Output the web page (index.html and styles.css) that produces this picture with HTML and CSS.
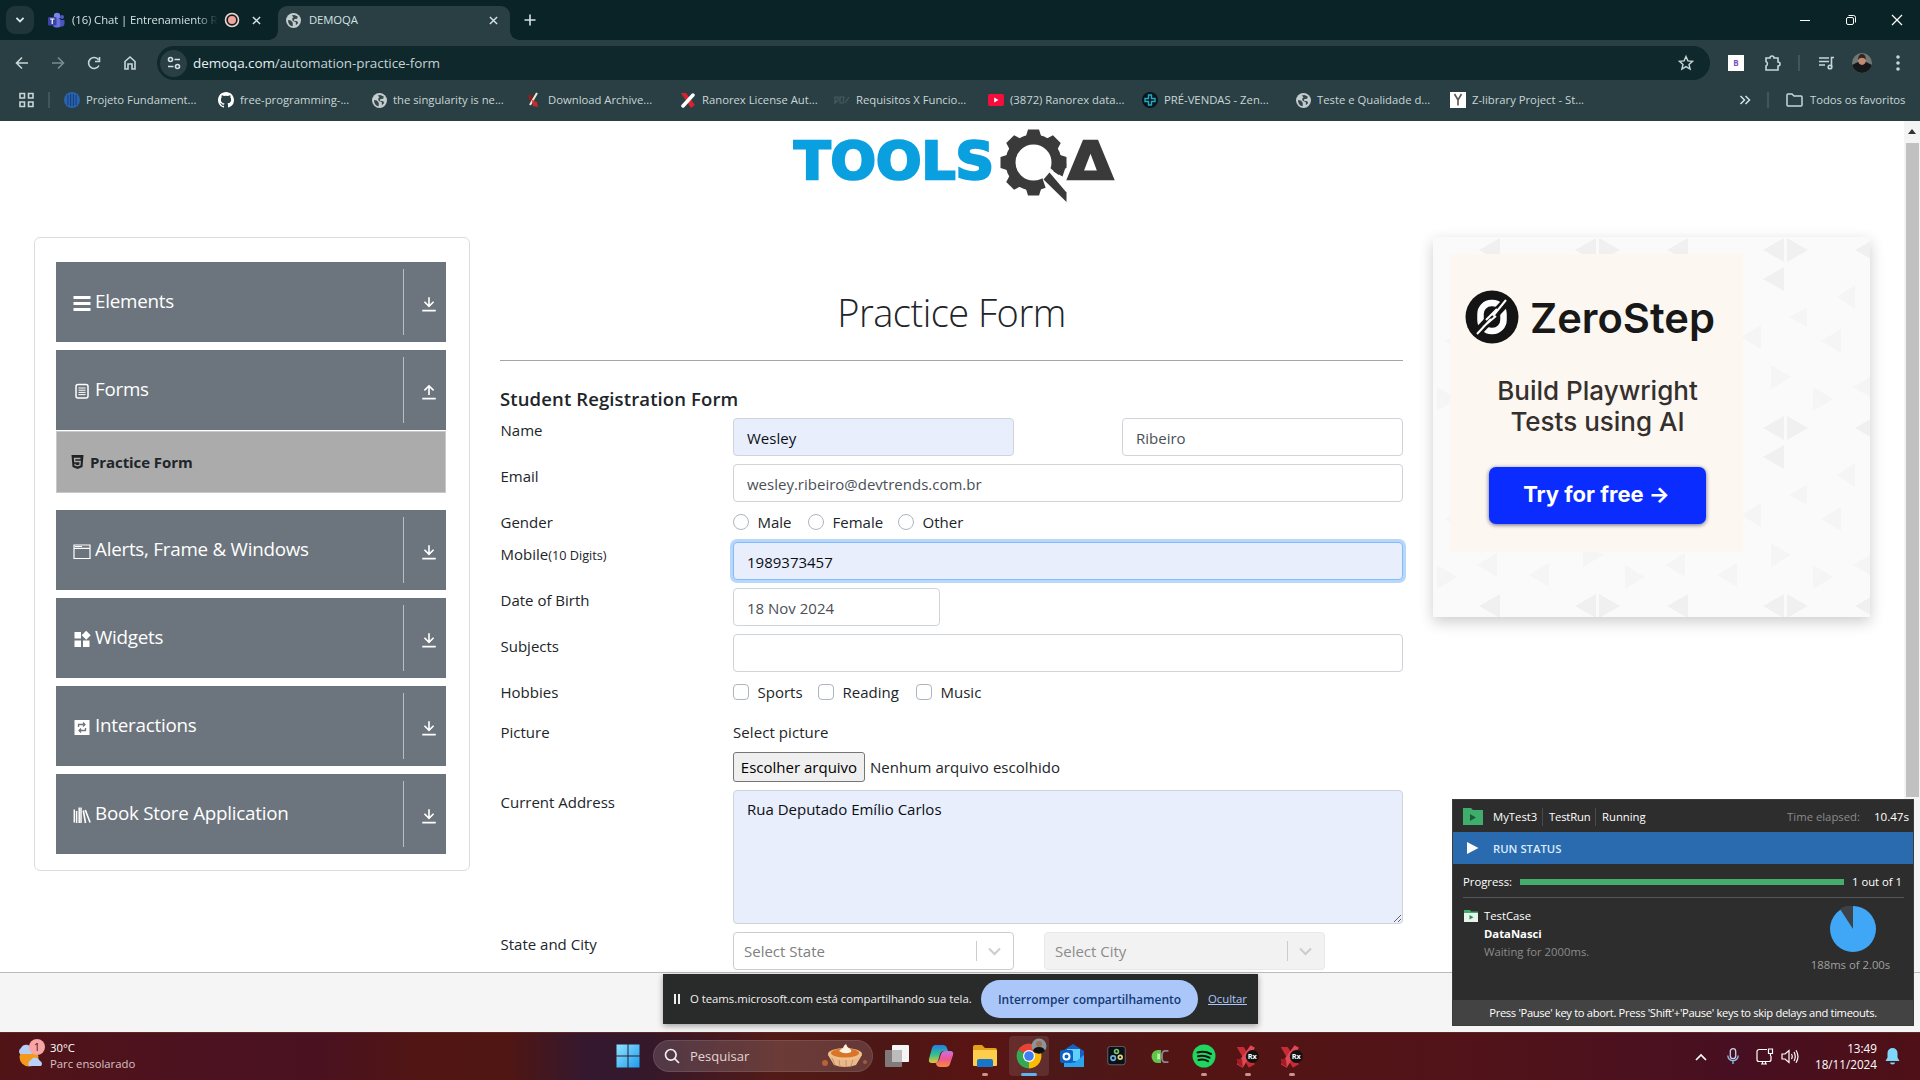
FILE: index.html
```html
<!DOCTYPE html>
<html lang="pt-BR">
<head>
<meta charset="utf-8">
<title>DEMOQA</title>
<link rel="stylesheet" href="styles.css">
</head>
<body>
<svg width="0" height="0" class="defs">
  <defs>
    <symbol id="down" viewBox="0 0 24 24"><path d="M12 3v12M5.500 9.500l6.500 6.500 6.500-6.500M2.500 22h19" fill="none" stroke="currentColor" stroke-width="2.300"/></symbol>
    <symbol id="up" viewBox="0 0 24 24"><path d="M12 17V4M5.500 10.500L12 4l6.500 6.500M2.500 22h19" fill="none" stroke="currentColor" stroke-width="2.300"/></symbol>
    <symbol id="globe" viewBox="0 0 16 16"><circle cx="8" cy="8" r="8" fill="#c4cccd"/><path d="M2.200 7.500l3 .6 2 2.300v3.800C4.500 14 2 11.500 2.200 7.500zM6 2.600L9 2l3.500 1.700-.5 2.400-3 .4-.7 1.800 3.700.4 1 2-2.500 2.300V9.800L7 8.200l-.4-2.400L8 4.600z" fill="#33484b"/></symbol>
    <symbol id="x" viewBox="0 0 10 10"><path d="M1 1l8 8M9 1L1 9" fill="none" stroke="currentColor" stroke-width="1.600"/></symbol>
    <symbol id="chev" viewBox="0 0 20 20"><path d="M4.500 7.500l5.500 5.500 5.500-5.500" fill="none" stroke="currentColor" stroke-width="2"/></symbol>
    <symbol id="rx" viewBox="0 0 30 28"><path d="M2 3l8 0 13 20-7 4z" fill="#c52c36"/><path d="M18 1l5 3L9 27l-7-4z" fill="#e04852"/><path d="M2 17l6 0 1 9-6-3z" fill="#a51c26"/><circle cx="20" cy="14" r="7.500" fill="#111"/><text x="20" y="17" font-family="Open Sans, sans-serif" font-weight="700" font-size="8.500" fill="#fff" text-anchor="middle">Rx</text></symbol>
  </defs>
</svg>

<header class="browser">
  <div class="tabstrip">
    <span class="tab-search"><svg width="12" height="12" viewBox="0 0 20 20"><path d="M4 6.500l6 6 6-6" fill="none" stroke="#d9e6e7" stroke-width="3"/></svg></span>
    <div class="tab idle">
      <svg width="17" height="17" viewBox="0 0 17 17"><circle cx="9" cy="4" r="3.200" fill="#7b83eb"/><circle cx="14" cy="5" r="2" fill="#5059c9"/><rect x="5" y="6.500" width="8" height="9" rx="3" fill="#6a72dd"/><path d="M12 8h4.500v4a3 3 0 0 1-4 2.500z" fill="#4b53bc"/><rect y="5" width="8.500" height="8.500" rx="1" fill="#3b43a8"/><path d="M2 7h4.500M4.250 7v5" stroke="#fff" stroke-width="1.200"/></svg>
      <span class="tab-title fade">(16) Chat | Entrenamiento R</span>
      <svg class="rec" width="16" height="16" viewBox="0 0 16 16"><circle cx="8" cy="8" r="6.500" fill="none" stroke="#f5d5d0" stroke-width="1.600"/><circle cx="8" cy="8" r="4" fill="#f4a39c"/></svg>
      <svg class="tab-x" width="9" height="9"><use href="#x"/></svg>
    </div>
    <div class="tab active">
      <svg width="15" height="15"><use href="#globe"/></svg>
      <span class="tab-title">DEMOQA</span>
      <svg class="tab-x" width="9" height="9"><use href="#x"/></svg>
    </div>
    <svg class="newtab" width="12" height="12" viewBox="0 0 12 12"><path d="M6 .5v11M.5 6h11" stroke="#d5e2e3" stroke-width="1.600"/></svg>
    <div class="wincontrols">
      <svg width="46" height="40" viewBox="0 0 46 40"><path d="M18 20.500h10" stroke="#fff"/></svg>
      <svg width="46" height="40" viewBox="0 0 46 40"><rect x="18.500" y="17.500" width="7" height="7" rx="1.500" fill="none" stroke="#fff"/><path d="M20.500 15.500h5a2 2 0 0 1 2 2v5" fill="none" stroke="#fff"/></svg>
      <svg width="46" height="40" viewBox="0 0 46 40"><path d="M18 15l10 10M28 15l-10 10" stroke="#fff" stroke-width="1.200"/></svg>
    </div>
  </div>

  <div class="toolbar">
    <svg class="tb" width="36" height="36" viewBox="-18 -18 36 36"><path d="M6 0H-5M0-5.500L-5.500 0 0 5.500" /></svg>
    <svg class="tb dim" width="36" height="36" viewBox="-18 -18 36 36"><path d="M-6 0H5M0-5.500L5.500 0 0 5.500"/></svg>
    <svg class="tb" width="36" height="36" viewBox="-18 -18 36 36"><path d="M5 2.500A5.500 5.500 0 1 1 4.500-3.300M5.500-6v4.500H1"/></svg>
    <svg class="tb" width="36" height="36" viewBox="-18 -18 36 36"><path d="M-5 6V-1.500L0-6l5 4.500V6H2V1h-4v5z"/></svg>
    <div class="omnibox">
      <span class="siteinfo"><svg width="14" height="14" viewBox="0 0 14 14" fill="none" stroke="#d5e2e3" stroke-width="1.600"><circle cx="3.500" cy="3.500" r="2"/><path d="M7.500 3.500H13M1 10.500h5.500"/><circle cx="10.500" cy="10.500" r="2"/></svg></span>
      <span class="url">demoqa.com<i>/automation-practice-form</i></span>
      <svg class="star" width="16" height="16" viewBox="0 0 16 16"><path d="M8 1.500l1.900 4.400 4.700.4-3.600 3.100 1.100 4.700L8 11.600l-4.100 2.500L5 9.400 1.400 6.300l4.700-.4z" fill="none" stroke="#c9d6d7" stroke-width="1.400"/></svg>
    </div>
    <span class="ext">B</span>
    <svg class="tb puzzle" width="36" height="36" viewBox="-18 -18 36 36"><path d="M-6-5h4a2 2 0 1 1 4 0h4v4a2 2 0 1 1 0 4v4H-6V3a2.500 2.500 0 0 0 0-4.500z"/></svg>
    <span class="vsep"></span>
    <svg class="tb queue" width="36" height="36" viewBox="-18 -18 36 36"><path d="M-7-5H3M-7-1.500H3M-7 2h6M5.500 4v-9.500H8"/><circle cx="4" cy="4" r="1.800"/></svg>
    <svg class="tb avatar" width="36" height="36" viewBox="-18 -18 36 36"><clipPath id="av"><circle r="10"/></clipPath><g clip-path="url(#av)" stroke="none"><rect x="-10" y="-10" width="20" height="20" fill="#6f7874"/><path d="M-10 10V2l6-3h8l6 3v8z" fill="#15171b"/><ellipse cy="-3" rx="4" ry="5" fill="#c08b75"/><path d="M-4-3c0-8 8-8 8 0-2-3-6-3-8 0z" fill="#30251f"/></g></svg>
    <svg class="tb dots" width="36" height="36" viewBox="-18 -18 36 36"><circle cy="-6" r="1"/><circle r="1"/><circle cy="6" r="1"/></svg>
  </div>

  <div class="bookmarks">
    <svg class="apps" width="15" height="16" viewBox="0 0 15 16" fill="none" stroke="#c9d6d7" stroke-width="1.600"><path d="M1 1.500h4.500v4.500H1zM9.500 1.500H14v4.500H9.500zM1 10h4.500v4.500H1zM9.500 10H14v4.500H9.500z"/></svg>
    <span class="vsep"></span>
    <div class="bm-list">
      <span class="bm"><svg width="16" height="16" viewBox="0 0 16 16"><circle cx="8" cy="8" r="8" fill="#2b62ae"/><path d="M4 3v10M6.700 2v12M9.400 2v12M12 3v10" stroke="#123c78"/></svg>Projeto Fundament...</span>
      <span class="bm"><svg width="16" height="16" viewBox="0 0 16 16"><path fill="#fff" d="M8 0C3.580 0 0 3.580 0 8c0 3.540 2.290 6.530 5.470 7.590.4.070.55-.17.55-.38v-1.490c-2.230.49-2.690-1.070-2.690-1.070-.36-.92-.89-1.170-.89-1.170-.73-.5.050-.49.050-.49.800.06 1.230.83 1.230.83.720 1.230 1.880.87 2.340.67.070-.52.280-.87.500-1.070-1.780-.2-3.640-.89-3.640-3.950 0-.87.310-1.590.82-2.150-.08-.2-.36-1.020.08-2.120 0 0 .67-.21 2.200.82a7.600 7.600 0 0 1 4 0c1.530-1.040 2.200-.82 2.200-.82.440 1.100.16 1.920.08 2.120.51.560.82 1.270.82 2.150 0 3.070-1.870 3.750-3.650 3.950.29.250.54.730.54 1.480v2.200c0 .21.150.46.550.38A8 8 0 0 0 16 8c0-4.420-3.580-8-8-8z"/></svg>free-programming-...</span>
      <span class="bm"><svg width="15" height="15"><use href="#globe"/></svg>the singularity is ne...</span>
      <span class="bm"><svg width="16" height="16" viewBox="0 0 16 16"><path d="M1 3l4 0 4 6-3 3z" fill="#8f1d22"/><path d="M11 1L4 13" stroke="#f1ead0" stroke-width="2"/><path d="M6 8l5 2 1 5-5-1z" fill="#c52c30"/></svg>Download Archive...</span>
      <span class="bm"><svg width="16" height="16" viewBox="0 0 16 16"><path d="M1 1h5l9 12-4 3z" fill="#d8232e"/><path d="M13 3L3 14" stroke="#fff" stroke-width="3.500" stroke-linecap="round"/></svg>Ranorex License Aut...</span>
      <span class="bm"><svg width="16" height="16" viewBox="0 0 16 16"><path d="M1 5v6l3-3V5zM6 5h4l-1 6H6zM15 5l-4 6" fill="none" stroke="#465c60" stroke-width="1.200"/></svg>Requisitos X Funcio...</span>
      <span class="bm"><svg width="16" height="16" viewBox="0 0 16 16"><rect y="2" width="16" height="12" rx="2" fill="#f70d3b"/><path d="M6.200 5.500v5L10.500 8z" fill="#fff"/></svg>(3872) Ranorex data...</span>
      <span class="bm"><svg width="16" height="16" viewBox="0 0 16 16"><circle cx="8" cy="8" r="8" fill="#07161c"/><path d="M6.500 3h3v3.500H13v3H9.500V13h-3V9.500H3v-3h3.500z" fill="none" stroke="#27a9c4" stroke-width="1.400"/></svg>PRÉ-VENDAS - Zen...</span>
      <span class="bm"><svg width="15" height="15"><use href="#globe"/></svg>Teste e Qualidade d...</span>
      <span class="bm"><svg width="16" height="16" viewBox="0 0 16 16"><rect width="16" height="16" fill="#fff"/><path d="M4.500 2L8 8l3.500-6M8 8v5.500" fill="none" stroke="#555" stroke-width="1.600"/></svg>Z-library Project - St...</span>
    </div>
    <svg class="more" width="12" height="10" viewBox="0 0 12 10"><path d="M1.500 1l4 4-4 4M6.500 1l4 4-4 4" fill="none" stroke="#d5e2e3" stroke-width="1.500"/></svg>
    <span class="vsep"></span>
    <span class="bm all"><svg width="17" height="14" viewBox="0 0 17 14"><path d="M1 12V2a1 1 0 0 1 1-1h4l2 2h7a1 1 0 0 1 1 1v8a1 1 0 0 1-1 1H2a1 1 0 0 1-1-1z" fill="none" stroke="#c9d6d7" stroke-width="1.500"/></svg>Todos os favoritos</span>
  </div>
</header>

<main class="viewport">
  <div class="page">
    <div class="logo">
      <svg width="322" height="76" viewBox="0 0 322 76">
        <text x="1" y="52.500" class="logo-text" fill="#0aa0e0" stroke="#0aa0e0" textLength="200" lengthAdjust="spacingAndGlyphs">TOOLS</text>
        <g transform="translate(240.500 36.500)">
          <circle r="23" fill="none" stroke="#3a3a3a" stroke-width="10"/>
          <g fill="#3a3a3a"><path id="tooth" d="M-8-25l2.500-8h11l2.500 8z"/><use href="#tooth" transform="rotate(45)"/><use href="#tooth" transform="rotate(90)"/><use href="#tooth" transform="rotate(180)"/><use href="#tooth" transform="rotate(225)"/><use href="#tooth" transform="rotate(270)"/><use href="#tooth" transform="rotate(315)"/></g>
          <path d="M8 13l8-8 18 15v21L12 25z" fill="#fff"/>
          <path d="M20 9l6-9 7 2-4 12z" fill="#3a3a3a"/>
          <path d="M10 17l6-7L33 30v9.500z" fill="#3a3a3a"/>
        </g>
        <text x="275" y="52.500" class="logo-text" fill="#3a3a3a" stroke="#3a3a3a" textLength="45" lengthAdjust="spacingAndGlyphs">Δ</text>
      </svg>
    </div>

    <div class="columns">
      <nav class="side">
        <div class="group"><svg class="gi" viewBox="0 0 18 18"><path d="M.5 3.500h17M.5 9.500h17M.5 15.500h17" stroke="#fff" stroke-width="3.200"/></svg><span>Elements</span><b></b><svg class="arr"><use href="#down"/></svg></div>
        <div class="group open"><svg class="gi" viewBox="0 0 18 18" fill="none" stroke="#fff"><rect x="3" y="2.500" width="12" height="13.500" rx="2" stroke-width="1.500"/><path d="M5.500 6h7M5.500 8.200h7M5.500 10.400h7M5.500 12.600h7" stroke-width="1"/></svg><span>Forms</span><b></b><svg class="arr"><use href="#up"/></svg></div>
        <div class="sub"><svg width="13" height="14" viewBox="0 0 13 14"><path d="M.5 0h12l-1 12-5 2-5-2z" fill="#222"/><path d="M9.500 3.500h-6l.3 3h5.400l-.3 3.500-2.400.8-2.400-.8-.1-1.300" fill="none" stroke="#ababab" stroke-width="1.300"/></svg><span>Practice Form</span></div>
        <div class="group"><svg class="gi" viewBox="0 0 18 18" fill="none" stroke="#fff"><path d="M1 3h16v13.500H1zM1 6.300h16" stroke-width="1.200"/><path d="M2 4.500h7" stroke-width="1"/></svg><span>Alerts, Frame &amp; Windows</span><b></b><svg class="arr"><use href="#down"/></svg></div>
        <div class="group"><svg class="gi" viewBox="0 0 18 18" fill="#fff"><path d="M1.500 2h6.500v6.500H1.500zM1.500 10.500h6.500V17H1.500zM10 10.500h6.500V17H10zM13.200.8l4.500 4.500-4.500 4.500L8.700 5.300z"/></svg><span>Widgets</span><b></b><svg class="arr"><use href="#down"/></svg></div>
        <div class="group"><svg class="gi" viewBox="0 0 18 18"><rect x="1.500" y="2" width="15" height="15" fill="#fff"/><path d="M5.500 9V6.500h6M10 4.500l2 2-2 2M12.500 10v2.500h-6M8 10.500l-2 2 2 2" fill="none" stroke="#6c757d" stroke-width="1.300"/></svg><span>Interactions</span><b></b><svg class="arr"><use href="#down"/></svg></div>
        <div class="group"><svg class="gi" viewBox="0 0 18 18"><path d="M1.300 3.500v13M3.600 5v12M6.200 1.500v15.500M8 1.500v15.500" stroke="#fff" stroke-width="1.500"/><path d="M10.300 4.500l2.200 12.500M12.300 4l4.800 12.500" stroke="#fff" stroke-width="1.600"/></svg><span>Book Store Application</span><b></b><svg class="arr"><use href="#down"/></svg></div>
      </nav>

      <section class="content">
        <h1>Practice Form</h1>
        <h5>Student Registration Form</h5>
        <div class="row r46"><label>Name</label><div class="fields names"><input class="fill" value="Wesley"><input value="Ribeiro"></div></div>
        <div class="row r46"><label>Email</label><div class="fields"><input value="wesley.ribeiro@devtrends.com.br"></div></div>
        <div class="row r32"><label>Gender</label><div class="fields opts"><span class="opt male"><i class="radio"></i>Male</span><span class="opt female"><i class="radio"></i>Female</span><span class="opt"><i class="radio"></i>Other</span></div></div>
        <div class="row r46"><label>Mobile<small>(10 Digits)</small></label><div class="fields"><input class="fill focus" value="1989373457"></div></div>
        <div class="row r46"><label>Date of Birth</label><div class="fields"><input class="date" value="18 Nov 2024"></div></div>
        <div class="row r46"><label>Subjects</label><div class="fields"><input value=""></div></div>
        <div class="row r40"><label>Hobbies</label><div class="fields opts"><span class="opt sports"><i class="check"></i>Sports</span><span class="opt reading"><i class="check"></i>Reading</span><span class="opt"><i class="check"></i>Music</span></div></div>
        <div class="row r70"><label>Picture</label><div class="fields pic"><span>Select picture</span><div class="file"><button>Escolher arquivo</button><span>Nenhum arquivo escolhido</span></div></div></div>
        <div class="row r142"><label>Current Address</label><div class="fields"><textarea class="fill">Rua Deputado Emílio Carlos</textarea></div></div>
        <div class="row r40"><label>State and City</label><div class="fields selects"><div class="select">Select State<svg width="20" height="20"><use href="#chev"/></svg></div><div class="select off">Select City<svg width="20" height="20"><use href="#chev"/></svg></div></div></div>
      </section>

      <aside class="ad">
        <svg class="pattern" width="437" height="380">
          <defs><pattern id="tri" width="188" height="178" patternUnits="userSpaceOnUse">
            <g fill="#f0f0f0"><path d="M142 13l21-12v24zM166 1l21 12-21 12zM142 42l21-12v24zM46 13l21-12v24z"/></g>
            <g fill="#f5f5f5"><path d="M28 60l18-12v24zM90 46l20 12-20 12zM12 104l20-12v24zM66 112l22 12-22 12zM120 100l20-12v24zM4 150l20 12-20 12zM96 160l20-12v24zM150 128l20 12-20 12zM44 150l20-12v24zM168 80l18-10v20z"/></g>
          </pattern></defs>
          <rect width="437" height="380" fill="#fafafa"/><rect width="437" height="380" fill="url(#tri)"/>
        </svg>
        <div class="banner">
          <div class="brand"><svg width="54" height="54" viewBox="-27 -27 54 54"><circle r="26.500" fill="#141414"/><rect x="-11.500" y="-14" width="23" height="28" rx="11" fill="none" stroke="#fff" stroke-width="6.500"/><path d="M-17 18L17-18" stroke="#141414" stroke-width="9"/><path d="M-15 17L-1 2M1-1L14-17M-6 3L5-8M-9 10L4-1" stroke="#fff" stroke-width="2"/></svg><span>ZeroStep</span></div>
          <p>Build Playwright<br>Tests using AI</p>
          <span class="cta">Try for free →</span>
        </div>
      </aside>
      <div class="scrollbar"><i></i><span></span></div>
    </div>
  </div>
  <div class="bottomstrip"></div>
</main>

<div class="sharebar">
  <i class="pause"></i><span>O teams.microsoft.com está compartilhando sua tela.</span>
  <span class="stop">Interromper compartilhamento</span><u>Ocultar</u>
</div>

<div class="runner">
  <div class="rhead"><svg width="20" height="17" viewBox="0 0 20 17"><path d="M0 0h8l2 2h10v15H0z" fill="#3fae6c"/><path d="M7 6l6 3.500-6 3.500z" fill="#1f5a37"/></svg><span class="seg s1">MyTest3</span><span class="seg s2">TestRun</span><span class="seg s3">Running</span><em>Time elapsed:</em><span class="secs">10.47s</span></div>
  <div class="rstat"><svg width="12" height="12" viewBox="0 0 12 12"><path d="M0 0l11.500 6L0 12z" fill="#fff"/></svg><span>RUN STATUS</span></div>
  <div class="rprog"><span class="pl">Progress:</span><i></i><span>1 out of 1</span></div>
  <div class="rbody">
    <svg width="14" height="12" viewBox="0 0 14 12"><path d="M0 0h6l1 1.500h7V4H0z" fill="#3fae6c"/><path d="M0 3h14v9H0z" fill="#e6f4ec"/><path d="M5.500 5l4 2.300-4 2.300z" fill="#2f8a55"/></svg>
    <div class="rtext"><span>TestCase</span><strong>DataNasci</strong><em>Waiting for 2000ms.</em></div>
    <div class="rpie"><svg width="46" height="46" viewBox="-23 -23 46 46"><circle r="23" fill="#3fa7f5"/><path d="M0 0L-13-20A24 24 0 0 1 0-24z" fill="#3c4248"/></svg><em>188ms of 2.00s</em></div>
  </div>
  <div class="rfoot">Press 'Pause' key to abort. Press 'Shift'+'Pause' keys to skip delays and timeouts.</div>
</div>

<footer class="taskbar">
  <div class="weather">
    <svg width="28" height="34" viewBox="0 0 28 34"><circle cx="12" cy="19" r="9.500" fill="#f39a1c"/><path d="M3 16a4 4 0 0 1 1-6 6 6 0 0 1 11 1v5z" fill="#b6cdf8"/><path d="M12 28a4 4 0 0 1 2-6 5 5 0 0 1 9 1 3 3 0 0 1 1 5z" fill="#b9d2f8"/><circle cx="20" cy="9" r="8" fill="#f7a5a5"/><text x="20" y="13" font-family="Open Sans, sans-serif" font-size="11" text-anchor="middle" fill="#5a1015">1</text></svg>
    <div><span>30°C</span><em>Parc ensolarado</em></div>
  </div>
  <div class="apps-row">
    <svg class="start" width="24" height="24" viewBox="0 0 24 24"><defs><linearGradient id="wg" x2="1" y2="1"><stop stop-color="#8fe4ff"/><stop offset="1" stop-color="#1c9cf0"/></linearGradient></defs><path d="M.5.5h11v11H.5zM12.500.5h11v11h-11zM.5 12.500h11v11H.5zM12.500 12.500h11v11h-11z" fill="url(#wg)"/></svg>
    <div class="search"><svg width="16" height="16" viewBox="0 0 16 16"><circle cx="6.800" cy="6.800" r="5.300" fill="none" stroke="#eee" stroke-width="1.700"/><path d="M10.700 10.700l4.300 4.300" stroke="#eee" stroke-width="1.700"/></svg><span>Pesquisar</span>
      <svg width="46" height="24" viewBox="0 0 46 24"><path d="M6 11h34l-6 10q-11 4-22 0z" fill="#e9b98c"/><ellipse cx="23" cy="10" rx="17" ry="6" fill="#f0c08a"/><ellipse cx="23" cy="9" rx="14" ry="4.500" fill="#d9742b"/><path d="M17 7q2-2 4-3 1-3 3-4 1 3 3 4 3 2 2 4-6 3-12-1z" fill="#fdf2df"/><path d="M10 14l3 7M17 16l1 7M24 16v7M31 16l-2 6" stroke="#c98e5e"/><circle cx="3" cy="19" r="3" fill="#b8623a"/><circle cx="43" cy="18" r="2" fill="#a45a38"/></svg></div>
    <span class="app"><svg width="26" height="26" viewBox="0 0 26 26"><rect x="8" y="2" width="17" height="17" rx="1" fill="#f5f5f5"/><rect x="1" y="7" width="17" height="17" rx="1" fill="#8c8c8c" opacity=".85"/><rect x="8" y="7" width="10" height="12" fill="#bcbcbc"/></svg></span>
    <span class="app"><svg width="26" height="26" viewBox="0 0 26 26"><defs><linearGradient id="c1" x2="0" y2="1"><stop stop-color="#1f7fe8"/><stop offset=".55" stop-color="#36c28b"/><stop offset="1" stop-color="#f1c232"/></linearGradient><linearGradient id="c2" x2="0" y2="1"><stop stop-color="#c770e8"/><stop offset=".5" stop-color="#f0568f"/><stop offset="1" stop-color="#f58a3c"/></linearGradient></defs><path d="M7 2h8q3 0 4 3l1 3h-4q-3 0-4 3l-2 7q-1 2-3 2H4q-4 0-3-4L4 5q1-3 3-3z" fill="url(#c1)"/><path d="M19 8h3q4 0 3 4l-3 9q-1 3-4 3h-6q-3 0-4-3l-.5-1.500q2.500 0 3.500-2.500l2-6q1-3 4-3z" fill="url(#c2)"/></svg></span>
    <span class="app run"><svg width="26" height="26" viewBox="0 0 26 26"><path d="M1 4q0-2 2-2h7l3 3h10q2 0 2 2v15H1z" fill="#e3a11b"/><rect x="1" y="7" width="24" height="16" rx="1" fill="#fcce4c"/><path d="M5 24v-6q0-2 2-2h12q2 0 2 2v6z" fill="#1676c9"/></svg></span>
    <span class="app on"><svg width="26" height="26" viewBox="-13 -13 26 26"><path d="M0 0L-10.800-6.200A12.500 12.500 0 0 1 10.800-6.200z" fill="#ea4335"/><path d="M0 0L10.800-6.200A12.500 12.500 0 0 1 0 12.500z" fill="#fbbc05"/><path d="M0 0L0 12.500A12.500 12.500 0 0 1-10.800-6.200z" fill="#34a853"/><circle r="6" fill="#fff"/><circle r="4.800" fill="#3b7ff0"/></svg><svg class="badge" width="16" height="16" viewBox="0 0 16 16"><circle cx="8" cy="8" r="7.500" fill="#8c9694"/><path d="M2 13q1-4 6-4t6 4a8 8 0 0 1-12 0z" fill="#111"/><circle cx="8" cy="6" r="3" fill="#9c6e5b"/></svg></span>
    <span class="app"><svg width="26" height="26" viewBox="0 0 26 26"><path d="M5 7l9-6 11 7v15H5z" fill="#1b5fc2"/><path d="M8 6h13v12H8z" fill="#5fd0fa"/><path d="M5 24V14l10 6 10-8v12z" fill="#2aa4ee"/><rect x="1" y="7" width="13" height="13" rx="2" fill="#0b63c4"/><circle cx="7.500" cy="13.500" r="3" fill="none" stroke="#fff" stroke-width="2"/></svg></span>
    <span class="app"><svg width="19" height="20" viewBox="0 0 22 24"><rect x=".5" y=".5" width="21" height="22" rx="3" fill="#0d1115" stroke="#68727a"/><g fill="none" stroke-width="2"><circle cx="11" cy="6.500" r="2.300" stroke="#7bc46c"/><circle cx="7" cy="14.500" r="2.700" stroke="#69b7e4"/><circle cx="15.500" cy="13.500" r="2.300" stroke="#e4d77a"/></g></svg></span>
    <span class="app"><svg width="20" height="15" viewBox="0 0 20 16"><path d="M8 1a7 7 0 0 0 0 14h3V1z" fill="#63c34b"/><rect x="7" y="5" width="3" height="6" fill="#b7f09f"/><path d="M19 2h-4q-3 0-3 6t3 6h4" fill="none" stroke="#8f8396" stroke-width="2"/></svg></span>
    <span class="app run"><svg width="24" height="24" viewBox="0 0 24 24"><circle cx="12" cy="12" r="11.500" fill="#1ed760"/><path d="M5.500 8.500q7-2 13.500 1.500M6 12.300q6-1.600 11.500 1.400M6.500 16q5-1.200 9.500 1.200" fill="none" stroke="#111" stroke-width="2" stroke-linecap="round"/></svg></span>
    <span class="app run"><svg width="26" height="25"><use href="#rx"/></svg></span>
    <span class="app run"><svg width="26" height="25"><use href="#rx"/></svg></span>
  </div>
  <div class="tray">
    <svg width="12" height="8" viewBox="0 0 12 8"><path d="M1 7l5-5 5 5" fill="none" stroke="#fff" stroke-width="1.700"/></svg>
    <svg class="mic" width="12" height="17" viewBox="0 0 12 17"><rect x="3.300" y=".7" width="5.400" height="10" rx="2.700" fill="none" stroke="#c8d0ec" stroke-width="1.300"/><path d="M.8 7.500a5.200 5.200 0 0 0 10.400 0M6 13v3" fill="none" stroke="#8fc4ee" stroke-width="1.300"/></svg>
    <svg class="net" width="18" height="17" viewBox="0 0 18 17" fill="none" stroke="#fff" stroke-width="1.200"><path d="M11 1.500H3a2 2 0 0 0-2 2v8a2 2 0 0 0 2 2h10a2 2 0 0 0 2-2V8M5 16h6M6.500 13.500V16M9.500 13.500V16M12.500 1h4v4.500h-4zM14.500 5.500V8"/></svg>
    <svg class="vol" width="18" height="15" viewBox="0 0 18 15" fill="none" stroke="#fff" stroke-width="1.200"><path d="M1 5h3l4-3.500v12L4 10H1zM10.500 5q1.500 2.500 0 5M13 3q2.500 4.500 0 9M15 1.200q4 6.300 0 12.600"/></svg>
    <div class="clock"><span>13:49</span><span>18/11/2024</span></div>
    <svg class="bell" width="15" height="17" viewBox="0 0 15 17"><path d="M7.500 0a5 5 0 0 1 5 5v4.500l2 3.500h-14l2-3.500V5a5 5 0 0 1 5-5zM5 14.500h5a2.500 2 0 0 1-5 0z" fill="#7fd8fb"/></svg>
  </div>
</footer>
</body>
</html>
```
FILE: styles.css
```css
* { box-sizing: border-box; }
body {
  margin: 0;
  width: 1920px;
  height: 1080px;
  overflow: hidden;
  position: relative;
  background: #fff;
  color: #212529;
  font-family: "Open Sans", "Noto Sans", sans-serif;
  font-size: 15px;
  line-height: 24px;
  display: flex;
  flex-direction: column;
}
svg { flex: none; display: block; }
em, i { font-style: normal; }
.defs { position: absolute; }

/* browser chrome */
.browser { height: 121px; flex: none; background: #293f43; color: #d5e2e3; font-size: 11.300px; line-height: 16px; }
.tabstrip { height: 40px; background: #0a2326; display: flex; align-items: center; padding-left: 6px; }
.tab-search { width: 28px; height: 28px; border-radius: 9px; background: #1f3539; display: grid; place-items: center; margin-top: -1px; }
.tab { height: 34px; display: flex; align-items: center; align-self: flex-end; padding-bottom: 6px; }
.tab.idle { width: 244px; padding-left: 14px; }
.tab-title { margin-left: 7px; white-space: nowrap; }
.fade { width: 146px; overflow: hidden; letter-spacing: -.08px; -webkit-mask-image: linear-gradient(90deg, #000 85%, transparent 100%); }
.rec { margin-left: 6px; }
.idle .tab-x { margin-left: 12px; }
.tab.active { width: 232px; background: #293f43; border-radius: 9px 9px 0 0; padding: 0 12px 6px 8px; position: relative; }
.tab.active::before, .tab.active::after { content: ""; position: absolute; bottom: 0; width: 9px; height: 9px; }
.tab.active::before { left: -9px; background: radial-gradient(circle at 0 0, transparent 8.500px, #293f43 9px); }
.tab.active::after { right: -9px; background: radial-gradient(circle at 100% 0, transparent 8.500px, #293f43 9px); }
.active .tab-title { letter-spacing: -.1px; margin-left: 8px; }
.active .tab-x { margin-left: auto; }
.newtab { margin-left: 14px; }
.wincontrols { margin-left: auto; display: flex; }

.toolbar { height: 41px; display: flex; align-items: center; padding-left: 4px; padding-top: 5px; }
.tb { fill: none; stroke: #c9d6d7; stroke-width: 1.600; }
.dim { opacity: .5; }
.omnibox { width: 1553px; height: 34px; margin-left: 9px; border-radius: 17px; background: #0f282c; display: flex; align-items: center; padding: 0 16px 0 3px; }
.siteinfo { width: 27px; height: 27px; border-radius: 50%; background: #293f43; display: grid; place-items: center; }
.url { font-size: 13.500px; margin-left: 6px; color: #e3f0f1; letter-spacing: -.1px; }
.url i { color: #c3d2d3; }
.star { margin-left: auto; }
.ext { width: 16px; height: 16px; background: #fff; color: #7c4fc4; font-weight: 700; font-size: 8px; text-align: center; margin-left: 18px; }
.puzzle { margin-left: 10px; }
.vsep { width: 2px; height: 16px; background: #3f565a; }
.toolbar .vsep { margin-left: 8px; }
.queue { margin-left: 8px; }
.dots { fill: #c9d6d7; }

.bookmarks { height: 40px; display: flex; align-items: center; padding: 0 0 2px 19px; letter-spacing: -.01px; }
.apps + .vsep { margin-left: 14px; }
.bm-list { display: flex; margin-left: 14px; width: 1676px; }
.bm { width: 154px; display: flex; align-items: center; gap: 6px; white-space: nowrap; color: #c9d6d7; }
.more { margin-left: -1px; }
.more + .vsep { margin-left: 16px; }
.bm.all { width: auto; margin-left: 17px; gap: 7px; letter-spacing: -.05px; }

/* page */
.viewport { height: 911px; flex: none; display: flex; flex-direction: column; }
.page { height: 851px; }
.logo { height: 116px; padding: 5px 0 0 793px; }
.logo-text { font: 700 52px "DejaVu Sans", sans-serif; stroke-width: 2.500; }
.columns { display: flex; height: 735px; }
.side { width: 436px; height: 634px; margin-left: 34px; border: 1px solid #dcdcdc; border-radius: 6px; padding: 24px 23px 0 21px; display: flex; flex-direction: column; gap: 8px; flex: none; }
.group { height: 80px; flex: none; background: #6c757d; color: #fff; font-size: 18.800px; display: flex; align-items: center; padding: 0 8px 0 17px; }
.group .gi { width: 18px; height: 18px; margin-top: 2px; }
.group span { margin-left: 4px; margin-top: -3px; letter-spacing: -.24px; }
.group b { width: 1px; height: 66px; background: #b8bec3; margin-left: auto; margin-right: 16px; }
.arr { width: 18px; height: 17px; margin-top: 3px; }
.sub { height: 62px; flex: none; margin: -7px 0 9px; background: #ababab; border: 1px solid #c6c8ca; display: flex; align-items: center; padding-left: 14px; font-weight: 700; font-size: 15px; color: #212529; letter-spacing: -.08px; }
.sub span { margin-left: 6px; }

.content { width: 903px; margin-left: 30px; flex: none; }
h1 { font-weight: 300; font-size: 38px; line-height: 48px; text-align: center; margin: 0; padding: 51px 0 24px; height: 124px; border-bottom: 1px solid #a5a5a5; letter-spacing: -.5px; }
h5 { font-weight: 600; font-size: 18.500px; line-height: 24px; margin: 26px 0 7px; letter-spacing: .12px; }
.row { display: grid; grid-template-columns: 233px 670px; }
label { padding-left: .5px; }
.r46 { height: 46px; } .r32 { height: 32px; } .r40 { height: 40px; } .r70 { height: 70px; } .r142 { height: 142px; }
label small { font-size: 12.700px; }
input, textarea { display: block; width: 100%; height: 38px; border: 1px solid #ced4da; border-radius: 4px; padding: 8px 12px 6px 13px; font: inherit; color: #495057; background: #fff; outline: none; margin: 0; }
textarea { height: 134px; padding-top: 6px; }
.fill { background: #e8eefb; color: #0b0f14; }
.focus { border-color: #80bdff; box-shadow: 0 0 0 3px #b9d7fb; }
.names { display: flex; justify-content: space-between; }
.names input { width: 281px; }
.date { width: 207px; }
.opts { display: flex; }
.opt { display: flex; height: 24px; }
.opt i { width: 16px; height: 16px; border: 1px solid #adb5bd; margin: 4px 8.500px 0 0; }
.radio { border-radius: 50%; } .check { border-radius: 4px; }
.male { width: 75px; } .female { width: 90px; } .sports { width: 85px; } .reading { width: 98px; }
.pic > span { display: block; height: 32px; letter-spacing: .07px; }
.file { display: flex; align-items: center; height: 30px; gap: 5px; }
.file span { letter-spacing: .05px; }
.file button { width: 132px; height: 30px; font: inherit; padding: 0; background: #efefef; border: 1px solid #767676; border-radius: 3px; color: #000; }
.selects { display: flex; gap: 30px; }
.select { width: 281px; height: 38px; border: 1px solid #ccc; border-radius: 4px; padding: 6px 0 6px 10px; color: #808080; display: flex; align-items: center; }
.select svg { margin-left: auto; color: #ccc; width: 37px; height: 20px; border-left: 1px solid #ccc; padding-right: 1px; }
.select.off { background: #f2f2f2; border-color: #e9e9e9; color: #8c8c8c; }

.ad { width: 437px; height: 380px; margin-left: 30px; flex: none; position: relative; box-shadow: 0 5px 14px rgba(0,0,0,.2); padding: 17px 0 0 17px; font-family: Inter, sans-serif; }
.pattern { position: absolute; inset: 0; }
.banner { position: relative; width: 293px; height: 298px; background: #fcf7f1; padding: 36px 0 0 15px; }
.brand { display: flex; align-items: center; height: 54px; color: #181818; }
.brand span { font-weight: 600; font-size: 41.700px; margin-left: 11px; margin-top: 1px; }
.banner p { margin: 31px 0 0; width: 265px; text-align: center; font-weight: 500; font-size: 26px; line-height: 31px; color: #35302d; }
.cta { display: block; width: 217px; height: 57px; margin: 30px 0 0 24px; border-radius: 7px; background: #0b2cff; box-shadow: 0 1px 4px rgba(0,0,60,.6); color: #fff; font-weight: 700; font-size: 22px; line-height: 54px; text-align: center; padding-right: 2px; }
.scrollbar { width: 16px; height: 851px; margin: -116px 0 0 auto; background: #f4f4f4; padding-top: 8px; display: flex; flex-direction: column; align-items: center; }
.scrollbar i { border: 4px solid transparent; border-bottom: 5px solid #333; border-top: 0; }
.scrollbar span { width: 13px; height: 654px; background: #c1c1c1; margin-top: 9px; }
.bottomstrip { height: 60px; border-top: 1px solid #bbb; background: #f5f5f5; }

/* screen sharing bar */
.sharebar { position: absolute; left: 663px; top: 974px; width: 595px; height: 50px; background: #292a2a; color: #f1f1f1; display: flex; align-items: center; padding-left: 11px; font-size: 11.400px; box-shadow: 0 2px 6px rgba(0,0,0,.35); white-space: nowrap; letter-spacing: -.05px; }
.pause { width: 6px; height: 10px; border: solid #eee; border-width: 0 2px; margin-right: 10px; }
.stop { position: absolute; left: 318px; width: 217px; height: 38px; border-radius: 19px; background: #abc7fa; color: #143a76; font-weight: 600; font-size: 12px; line-height: 39px; text-align: center; letter-spacing: 0; }
.sharebar u { position: absolute; left: 545px; color: #abc7fa; }

/* test runner */
.runner { position: absolute; left: 1452px; top: 799px; width: 462px; height: 227px; background: #2d2d2d; border: 1px solid #3c3c3c; color: #fff; font-size: 11.300px; line-height: 18px; }
.rhead { height: 32px; display: flex; align-items: center; padding: 1px 4px 0 10px; }
.seg { padding-right: 5px; white-space: nowrap; }
.s1 { margin-left: 10px; width: 50px; border-right: 1px solid #4a4a4a; }
.s2 { padding-left: 6px; width: 53px; border-right: 1px solid #4a4a4a; letter-spacing: -.2px; }
.s3 { padding-left: 6px; }
.rhead em { margin-left: auto; margin-right: 14px; color: #8b8b8b; }
.secs { font-size: 11.600px; }
.rstat { height: 32px; background: #2a6bb0; display: flex; align-items: center; padding-left: 14px; gap: 14px; font-weight: 600; color: #dcecfb; }
.rstat span { margin-top: 1px; }
.rprog { height: 34px; margin: 0 9px 0 10px; border-bottom: 1px solid #53565a; display: flex; align-items: center; padding-top: 2px; }
.rprog i { width: 324px; height: 6px; background: #45ae6c; margin: 0 8px 0 8px; }
.pl { width: 49px; }
.rbody { display: flex; height: 102px; padding: 9px 0 0 11px; }
.rbody > svg { margin-top: 3px; }
.rtext { display: flex; flex-direction: column; margin-left: 6px; }
.rbody em { color: #8b8b8b; }
.rpie { margin-left: auto; width: 120px; display: flex; flex-direction: column; align-items: center; margin-top: -1px; }
.rpie em { margin: 4px 5px 0 0; color: #a0a0a0; }
.rfoot { height: 25px; background: #434343; text-align: center; line-height: 25px; font-size: 11.200px; letter-spacing: -.34px; white-space: nowrap; }

/* taskbar */
.taskbar { height: 48px; flex: none; display: flex; color: #fff; font-size: 11.300px; line-height: 16px; border-top: 1px solid #5a2a24; background: linear-gradient(90deg, #501417 0, #4c1221 220px, #4a1220 320px, #511513 420px, #4f1614 510px, #331830 590px, #351829 650px, #531b17 780px, #4c1715 880px, #5a1412 980px, #4c1818 1060px, #541413 1200px, #51131a 1500px, #470f22 1740px, #4f1016 1920px); }
.weather { width: 616px; display: flex; padding: 5px 0 0 17px; }
.weather svg { margin-right: 5px; }
.weather div { display: flex; flex-direction: column; padding-top: 2px; }
.weather em { color: #dcc0c4; }
.apps-row { display: flex; align-items: center; width: 700px; padding-bottom: 1px; }
.search { width: 220px; height: 32px; margin: 0 2px 0 13px; border-radius: 16px; background: rgba(255,255,255,.14); border: 1px solid rgba(255,255,255,.1); display: flex; align-items: center; padding: 0 4px 0 10px; font-size: 13px; color: #e2d6d4; }
.search span { margin-left: 10px; }
.search svg:last-child { margin-left: auto; }
.app { width: 40px; height: 40px; margin: 0 1.950px; display: grid; place-items: center; position: relative; border-radius: 4px; }
.app.run::after, .app.on::after { content: ""; position: absolute; bottom: 0; width: 6px; height: 3px; border-radius: 2px; background: #c9948c; }
.app.on { background: rgba(255,255,255,.1); }
.app.on::after { width: 16px; background: #5db4f0; }
.badge { position: absolute; right: 2px; top: 2px; }
.tray { margin-left: auto; display: flex; align-items: center; padding-right: 20px; }
.mic { margin-left: 20px; } .net { margin-left: 17px; } .vol { margin-left: 7px; }
.clock { width: 78px; display: flex; flex-direction: column; text-align: right; font-size: 11.700px; padding-bottom: 1px; }
.bell { margin-left: 8px; }
```
